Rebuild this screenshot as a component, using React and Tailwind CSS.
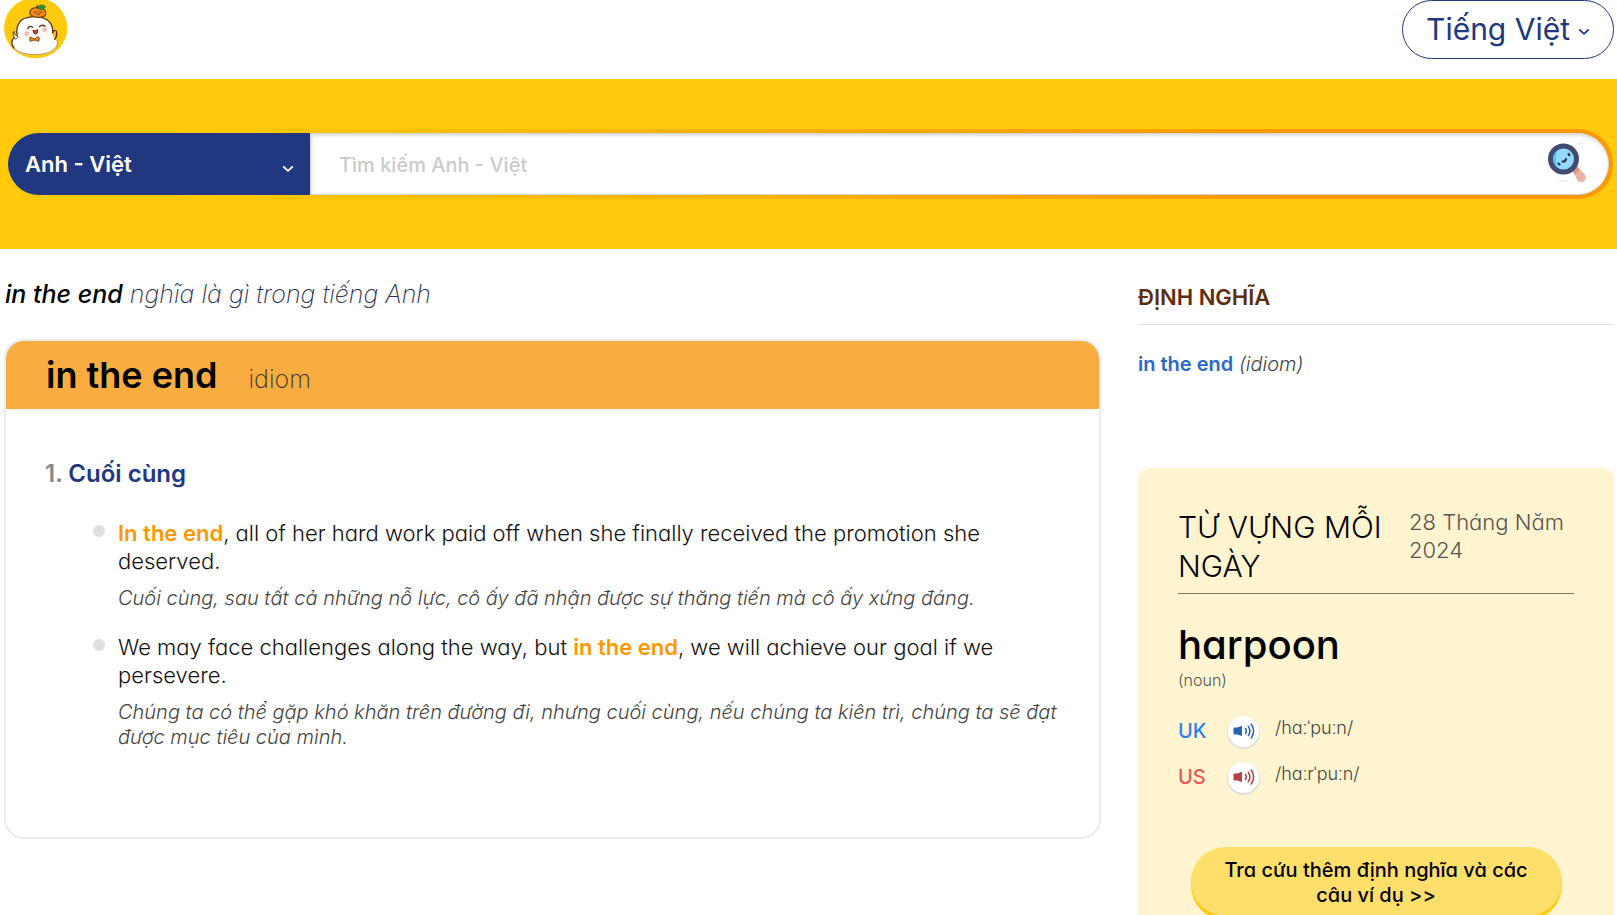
import React from 'react';

function Mascot() {
  return (
    <svg viewBox="0 0 204 177" className="block h-[59px] w-[68px]" aria-hidden="true">
      <ellipse cx="107" cy="84" rx="95" ry="91" fill="#ffca0b" />
      <path
        d="M50 108C48 82 56 56 82 52C108 47 142 50 154 74C159 84 158 92 158 106C160 116 172 116 173 125C174 145 156 158 128 163C92 168 52 164 39 140C33 125 36 110 42 109Z"
        fill="#fff"
      />
      <path
        d="M54 108C40 108 42 92 44 94C36 96 40 106 42 112C44 120 52 118 54 108Z"
        fill="#fff"
        stroke="#5d3317"
        strokeWidth="3"
      />
      <path
        d="M51 104C48 80 58 56 82 53C108 46 142 50 154 74C158 82 159 90 158 99M42 112C34 122 34 134 42 144M158 99C161 89 169 89 170 97C171 107 168 114 164 118"
        fill="none"
        stroke="#5d3317"
        strokeWidth="4"
        strokeLinecap="round"
      />
      <path d="M42 144C62 164 96 166 128 162C150 158 172 148 173 127C173 121 169 119 164 118" fill="none" stroke="#a57a4a" strokeWidth="2.500" />
      <path d="M90 42C88 26 104 20 117 24C134 24 140 34 136 46C128 55 98 54 90 42Z" fill="#f08a1d" stroke="#7b4012" strokeWidth="4" />
      <path d="M103 38l6-3M119 35l6 3M111 42q4 4 8 0" fill="none" stroke="#6b3410" strokeWidth="3" strokeLinecap="round" />
      <path d="M114 24C112 14 128 12 137 20C130 31 119 30 114 24Z" fill="#2f8f3c" stroke="#256b2c" strokeWidth="2" />
      <path d="M114 25q-1-6-4-9" fill="none" stroke="#5d3317" strokeWidth="4" />
      <path d="M83 86q6-11 15-4M118 80q8-8 17-1" fill="none" stroke="#5d3317" strokeWidth="4" strokeLinecap="round" />
      <path d="M99 91q7 3 14-2q1 13-6 13t-8-11Z" fill="#d9432f" stroke="#5d3317" strokeWidth="3" />
      <circle cx="80" cy="101" r="7" fill="#fbb9ae" />
      <circle cx="134" cy="89" r="7" fill="#fbb9ae" />
      <path d="M62 103q16 8 29 10M117 112q16-5 27-16" fill="none" stroke="#f0d9cc" strokeWidth="2" />
      <path d="M103 117L91 111Q87 118 91 124L103 120L116 124Q121 117 115 110Z" fill="#ef8a1e" stroke="#8a4a15" strokeWidth="3" strokeLinejoin="round" />
    </svg>
  );
}

function Magnifier() {
  return (
    <svg viewBox="0 0 38 40" className="h-10 w-[38px]" aria-hidden="true">
      <path d="M25 28l4-4 7.500 7a4.800 4.800 0 0 1-7 6.800z" fill="#eab5a2" />
      <path d="M24 28l5-5 3 3.500-5 5z" fill="#d9998a" />
      <circle cx="15.500" cy="16" r="13" fill="#93d9ff" stroke="#414a70" strokeWidth="5" />
      <path d="M9.500 7.500A10.500 10.500 0 0 0 9.500 24.500Q6 16 9.500 7.500Z" fill="#58c1ea" />
      <path d="M14.500 18.500q3 .5 3.500-2.500" fill="none" stroke="#263550" strokeWidth="2.200" strokeLinecap="round" />
      <path d="M10.500 20.500l1 1M20.500 11l1 1.200" stroke="#263550" strokeWidth="2.200" strokeLinecap="round" />
      <path d="M11 38h9" stroke="#dfe3ee" strokeWidth="1" />
      <path d="M30 .5h5" stroke="#f6e4df" strokeWidth="1" />
    </svg>
  );
}

function Chevron({ className }) {
  return (
    <svg viewBox="0 0 12 8" className={className} fill="none" stroke="currentColor" strokeWidth="1.700" strokeLinejoin="round" aria-hidden="true">
      <path d="M1.300 1.500L6 5.800l4.700-4.300" />
    </svg>
  );
}

function Speaker() {
  return (
    <svg viewBox="0 0 22 18" className="h-[18px] w-[22px]" fill="none" stroke="currentColor" strokeWidth="1.500" strokeLinecap="round" aria-hidden="true">
      <path d="M.5 6.500Q.5 5.500 1.500 5.500H4.500L9 3.800V14L4.500 12.500H1.500Q.5 12.500 .5 11.500Z" fill="currentColor" stroke="none" />
      <path d="M12.500 6.500q1.600 2.500 0 5M15.300 4.300q3.200 4.700 0 9.400M18.200 2q4.800 7 0 14" />
    </svg>
  );
}

function Example({ children, translation }) {
  return (
    <li className="flex gap-[13px]">
      <span className="mt-1.5 size-3 shrink-0 rounded-full bg-[#dfdfdf]" />
      <div>
        <p className="text-[22px] leading-7 text-[#111]">{children}</p>
        <p className="mt-[11px] text-[20px] leading-[25px] text-[#444] italic">{translation}</p>
      </div>
    </li>
  );
}

function Pronunciation({ region, ipa, labelClass, iconClass }) {
  return (
    <div className="flex h-[46px] items-center">
      <span className={`w-[50px] text-[20px] font-medium ${labelClass}`}>{region}</span>
      <button
        type="button"
        aria-label={`${region} audio`}
        className={`flex size-[31px] items-center justify-center rounded-full bg-white shadow-[0_1px_1px_1px_#dddddd] ${iconClass}`}
      >
        <Speaker />
      </button>
      <span className="ml-4 pb-1.5 text-[18px] leading-6 text-[#444]">{ipa}</span>
    </div>
  );
}

export default function App() {
  return (
    <div className="min-h-screen bg-white font-['Inter','Noto_Sans',sans-serif] font-light [font-feature-settings:'cv11']">
      <header className="flex h-[79px] items-start justify-between pr-[3px]">
        <a href="#home" aria-label="Home">
          <Mascot />
        </a>
        <button type="button" className="flex h-[59px] w-[212px] items-center justify-center gap-2 rounded-full border border-[#213780] text-[30px] font-normal text-[#213780]">
          Tiếng Việt
          <Chevron className="mt-1 h-2 w-3" />
        </button>
      </header>

      <section className="bg-[#ffca0b] px-1 py-[50px]">
        <form className="flex h-[70px] rounded-full bg-linear-to-r from-[#ffca0b] from-10% to-[#ff9800] to-80% p-1" onSubmit={(e) => e.preventDefault()}>
          <div className="relative w-[302px] shrink-0">
            <select aria-label="Từ điển" className="h-full w-full appearance-none rounded-l-full bg-[#213780] pl-[17px] text-[22px] font-semibold text-white">
              <option>Anh - Việt</option>
            </select>
            <Chevron className="pointer-events-none absolute right-4 bottom-[22px] h-2 w-3 text-white" />
          </div>
          <div className="flex min-w-0 flex-1 items-center rounded-r-full border border-[#d5d5d5] bg-white pr-[22px] pb-0.5 shadow-[inset_1px_2px_3px_#dddddd]">
            <input
              type="text"
              aria-label="Tìm kiếm"
              placeholder="Tìm kiếm Anh - Việt"
              className="h-full min-w-0 flex-1 bg-transparent pt-1 pl-7 text-[20px] font-medium outline-none placeholder:text-[#cbcbcb]"
            />
            <button type="submit" aria-label="Tra cứu">
              <Magnifier />
            </button>
          </div>
        </form>
      </section>

      <main className="flex gap-[37px] pr-[3px] pl-1">
        <div className="min-w-0 flex-1">
          <h1 className="mt-[29px] px-px text-[25px] leading-8 font-extralight text-[#2b2f50] italic">
            <b className="font-medium text-black">in the end</b> nghĩa là gì trong tiếng Anh
          </h1>

          <article className="mt-[29px] overflow-hidden rounded-[20px] border-2 border-[#ebebeb]">
            <header className="flex h-[68px] items-center bg-[#f9ad40] px-10">
              <div className="flex items-baseline gap-[31px]">
                <h2 className="text-[36px] font-semibold text-black">in the end</h2>
                <span className="text-[25px] font-extralight text-[#333]">idiom</span>
              </div>
            </header>
            <div className="px-[39px] pt-[49px] pb-[87px]">
              <h3 className="text-[24px] leading-8 font-semibold text-[#213780]">
                <span className="text-[#888]">1.</span> Cuối cùng
              </h3>
              <ul className="mt-[29px] flex flex-col gap-[22px] pl-12">
                <Example translation="Cuối cùng, sau tất cả những nỗ lực, cô ấy đã nhận được sự thăng tiến mà cô ấy xứng đáng.">
                  <b className="font-semibold text-[#ff9800]">In the end</b>, all of her hard work paid off when she finally received the promotion she deserved.
                </Example>
                <Example translation="Chúng ta có thể gặp khó khăn trên đường đi, nhưng cuối cùng, nếu chúng ta kiên trì, chúng ta sẽ đạt được mục tiêu của mình.">
                  We may face challenges along the way, but <b className="font-semibold text-[#ff9800]">in the end</b>, we will achieve our goal if we persevere.
                </Example>
              </ul>
            </div>
          </article>
        </div>

        <aside className="w-[476px] shrink-0">
          <h2 className="mt-[33px] border-b border-[#dddddd] pb-[11px] text-[22px] leading-[31px] font-semibold text-[#5c2e12]">ĐỊNH NGHĨA</h2>
          <p className="mt-[25px] text-[20px] leading-7 text-[#444]">
            <a href="#in-the-end" className="font-semibold text-[#2a6ac6]">in the end</a> <i>(idiom)</i>
          </p>

          <section className="mt-[90px] rounded-t-xl bg-[#fff4d0] px-10 pt-10 pb-6">
            <div className="flex justify-between border-b border-[#7d7866] pb-[7px]">
              <h2 className="w-[228px] text-[30px] leading-[39px] text-black">TỪ VỰNG MỖI NGÀY</h2>
              <time className="w-[165px] text-[22px] leading-7 text-[#555]">28 Tháng Năm 2024</time>
            </div>
            <h3 className="mt-[26px] text-[40px] leading-[50px] font-medium text-black">harpoon</h3>
            <p className="text-[16px] leading-5 text-[#555]">(noun)</p>
            <div className="mt-[18px]">
              <Pronunciation region="UK" ipa="/hɑːˈpuːn/" labelClass="text-[#2f80ed]" iconClass="text-[#2a62b8]" />
              <Pronunciation region="US" ipa="/hɑːrˈpuːn/" labelClass="text-[#eb5757]" iconClass="text-[#b94040]" />
            </div>
            <a href="#harpoon" className="mx-auto mt-[47px] block w-[371px] rounded-[36px] bg-[#ffdf6b] px-6 pt-[11px] pb-2 text-center text-[20px] leading-[25px] font-medium text-black shadow-[0_4px_0_#ffca0b]">
              Tra cứu thêm định nghĩa và các câu ví dụ &gt;&gt;
            </a>
          </section>
        </aside>
      </main>
    </div>
  );
}
